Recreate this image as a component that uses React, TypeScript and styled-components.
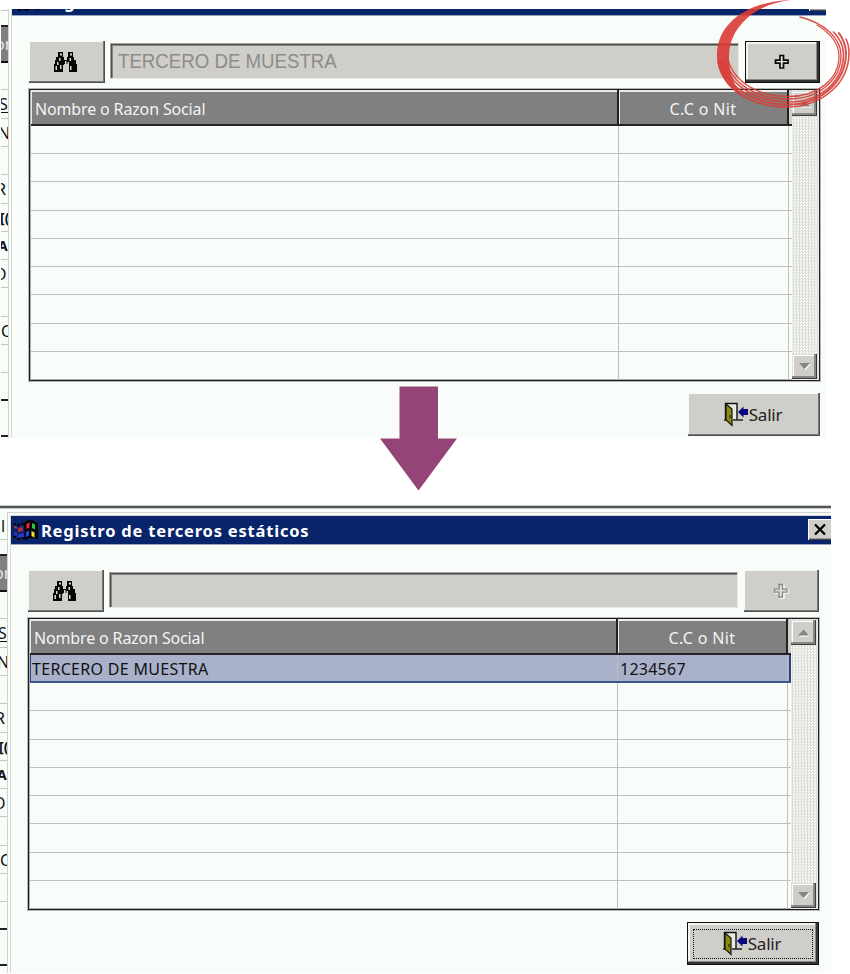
import React from "react";
import styled, { createGlobalStyle, css } from "styled-components";

const face = "#d0cec8";
const paper = "#f8fdf9";
const ui = '"Noto Sans", "DejaVu Sans", sans-serif';

const GlobalStyle = createGlobalStyle`
  * { box-sizing: border-box; }
  body { margin: 0; background: #fff; }
  svg { display: block; flex: none; }
`;

const Page = styled.main`
  position: relative;
  width: 850px;
  height: 974px;
  overflow: hidden;
  padding-top: 9px;
  background: #fff;
`;

const Capture = styled.section<{ $cropped?: boolean }>`
  overflow: hidden;
  width: ${(p) => (p.$cropped ? 825 : 831)}px;
  height: ${(p) => (p.$cropped ? 429 : 469)}px;
  margin: ${(p) => (p.$cropped ? "0 0 66px 1px" : "0")};
`;

const Desktop = styled.div<{ $cropped?: boolean }>`
  display: grid;
  grid-template-columns: 7px 824px;
  grid-template-rows: 8px 461px;
  width: 831px;
  margin-top: ${(p) => (p.$cropped ? -34 : 0)}px;
  background: ${paper};
`;

const TopEdge = styled.div`
  grid-column: 1 / 3;
  height: 4px;
  margin-top: 1px;
  border-top: 1px solid #c7cac7;
  border-bottom: 1px solid #c7cac7;
  background: #555;
`;

const Strip = styled.div`
  overflow: hidden;
  display: flex;
  flex-direction: column;
  font: 16px ${ui};
  color: #111;
`;

const StripCell = styled.div<{ $h: number; $tone?: "head" | "dark" }>`
  flex: none;
  display: flex;
  align-items: center;
  height: ${(p) => p.$h}px;
  white-space: nowrap;
  border-bottom: 1px solid #c3c5c2;
  ${(p) =>
    p.$tone === "head" &&
    css`
      background: #808080;
      color: #e8e8e8;
      border-bottom: 2px solid #111;
    `}
  ${(p) => p.$tone === "dark" && "border-bottom: 2px solid #222;"}
`;

const StripText = styled.span<{ $x?: number; $underline?: boolean; $bold?: boolean }>`
  margin-left: ${(p) => p.$x ?? 0}px;
  line-height: 16px;
  ${(p) => p.$bold && "font-weight: bold; font-size: 14px;"}
  ${(p) => p.$underline && "border-bottom: 1px solid #111;"}
`;

const Dialog = styled.div`
  width: 824px;
  height: 461px;
  padding: 3px 0 0 3px;
  border-left: 1px solid #d3d3cd;
  border-top: 1px solid #d3d3cd;
  box-shadow: inset 2px 2px 0 ${paper}, inset 3px 3px 0 #d9d9d3;
  background: ${paper};
`;

const TitleBar = styled.header`
  display: flex;
  align-items: center;
  width: 820px;
  height: 29px;
  padding-left: 2px;
  background: #08246b;
  border-bottom: 1px solid #9aa5c0;
`;

const Title = styled.h1`
  flex: 1;
  margin: 1px 0 0 2px;
  color: #fff;
  font: bold 16.5px/26px ${ui};
  letter-spacing: 0.8px;
  white-space: nowrap;
`;

const CloseButton = styled.button`
  display: flex;
  align-items: center;
  justify-content: center;
  width: 23px;
  height: 21px;
  margin-bottom: 2px;
  padding: 0;
  border: 0;
  background: ${face};
  box-shadow: inset 1px 1px #fff, inset 0 -1px #444, inset 0 -2px #999;
`;

const Body = styled.div`
  display: flex;
  flex-direction: column;
  align-items: flex-end;
  width: 809px;
  padding: 25px 1px 0 0;
`;

const SearchRow = styled.div`
  display: flex;
  align-items: flex-start;
  width: 791px;
  height: 42px;
`;

const Button = styled.button<{ $w: number; $focus?: boolean; $h?: number }>`
  display: flex;
  flex: none;
  align-items: center;
  justify-content: center;
  width: ${(p) => p.$w}px;
  height: ${(p) => p.$h ?? 42}px;
  padding: 0;
  border: 0;
  color: #222;
  background: ${face};
  box-shadow: inset -1px -1px #505050, inset -2px -2px #777, inset 1px 1px #f6faf5;
  ${(p) =>
    p.$focus &&
    css`
      box-shadow: inset 0 0 0 1px #111, inset -3px -3px #333, inset -4px -4px #888,
        inset 3px 3px #f3f4f0;
    `}
`;

const Field = styled.div`
  flex: none;
  width: 629px;
  height: 36px;
  margin: 2px 6px 0 5px;
  padding-left: 7px;
  border: 1px solid #a2a2a0;
  border-right-color: #e7e8e2;
  border-bottom-color: #e7e8e2;
  box-shadow: inset 1px 1px #4e4e4e, inset 2px 2px #858585;
  background: ${face};
  color: #8c8c88;
  font: 19.5px/35px "Liberation Sans", Arial, sans-serif;
  white-space: nowrap;
`;

const FieldText = styled.span`
  display: inline-block;
  transform-origin: left;
  transform: scaleX(0.957);
`;

const Grid = styled.div`
  display: grid;
  grid-template-columns: 762px 27px;
  grid-template-rows: 290px;
  width: 791px;
  height: 292px;
  margin-top: 6px;
  border: 1px solid #1d1d1d;
  box-shadow: 0 0 0 1px #b5b7b4, inset 0 0 0 1px #aaa;
`;

const Table = styled.div`
  display: grid;
  grid-template-rows: 36px repeat(9, minmax(0, 1fr));
  padding-left: 1px;
`;

const Row = styled.div<{ $selected?: boolean }>`
  display: grid;
  grid-template-columns: 588px 170px 1fr;
  grid-template-rows: minmax(0, 1fr);
  border-bottom: 1px solid #bdc0bd;
  color: #111;
  font: 16px/29px ${ui};
  &:last-child { border-bottom: 0; }
  ${(p) =>
    p.$selected &&
    css`
      background: #a9b0c9;
      border-bottom: 2px solid #3a568f;
      box-shadow: inset 1px 0 #29447c, inset -2px 0 #29447c;
    `}
`;

const HeadRow = styled(Row)`
  border-bottom: 2px solid #252525;
  background: ${face};
`;

const Cell = styled.div`
  padding-left: 2px;
  border-right: 1px solid #bdc0bd;
  white-space: nowrap;
  &:last-child { border: 0; }
`;

const HeadCell = styled.div<{ $center?: boolean }>`
  padding-left: ${(p) => (p.$center ? 0 : 4)}px;
  border-right: 2px solid #222;
  background: #808080;
  box-shadow: inset 1px 2px #e9ebe8;
  color: #f4f4f4;
  font: 16px/38px ${ui};
  text-align: ${(p) => (p.$center ? "center" : "left")};
  white-space: nowrap;
`;

const Fit = styled.span<{ $spacing: number }>`
  letter-spacing: ${(p) => p.$spacing}px;
`;

const ScrollBar = styled.div`
  display: flex;
  flex-direction: column;
  justify-content: space-between;
  padding: 1px 1px 1px 0;
  background-color: #f7f9f5;
  background-image: conic-gradient(#dcdcd6 25%, #f8faf6 0 50%, #dcdcd6 0 75%, #f8faf6 0);
  background-size: 3px 3px;
`;

const ScrollButton = styled.button`
  display: flex;
  align-items: center;
  justify-content: center;
  width: 25px;
  height: 25px;
  padding: 0;
  border: 0;
  background: ${face};
  box-shadow: inset -1px -1px #3c3c3c, inset -3px -3px #888, inset 1px 1px #ddd, inset 2px 2px #fff;
`;

const FocusRect = styled.span<{ $on?: boolean }>`
  display: flex;
  align-items: center;
  justify-content: center;
  width: 120px;
  height: 30px;
  padding-right: 3px;
  border: 1px ${(p) => (p.$on ? "dotted #111" : "solid transparent")};
  font: 17px/26px ${ui};
  letter-spacing: -0.2px;
`;

const ExitSlot = styled.div`
  margin-top: 12px;
`;

const DownArrow = styled.svg`
  position: absolute;
  left: 380px;
  top: 386px;
`;

const Highlight = styled.svg`
  position: absolute;
  left: 710px;
  top: 0;
`;

const Binoculars = () => (
  <svg width="26" height="22" viewBox="0 0 26 22">
    <path
      fill="#050505"
      d="M6 1h5v5h1v3h3V6h1V1h5v5h1v3h2v4h1v8h-8v-7h-1v-1h-4v1h-1v7H1v-8h2V9h1V6h2z"
      transform="translate(-2 0)"
    />
    <path
      fill="#d7d6d0"
      d="M6 2.500h2v2H6zM16 2.500h2v2h-2zM5 7h1.500v3H5zM3 11h1.500v3H3zM1.500 15H3v4H1.500zM6 14h1.500v4H6zM11 10h1.500v3H11zM15.500 7H17v3h-1.500zM13.500 11H15v3h-1.500zM16 15h1.500v4H16z"
    />
  </svg>
);

const Plus = ({ disabled }: { disabled?: boolean }) => (
  <svg width="18" height="16" viewBox="1 0 16 16" fill={disabled ? "#dddcd6" : "#e5e5df"}>
    {disabled && (
      <path d="M7 2.500h4v4h4v3.500h-4v5H7v-5H2.500V6.500H7z" stroke="#fff" strokeWidth="1.400" />
    )}
    <path
      d="M6 1.500h3.500v4.700H14v3H9.500v4.800H6V9.200H1.500v-3H6z"
      stroke={disabled ? "#888884" : "#080808"}
      strokeWidth={disabled ? 1.3 : 1.7}
    />
  </svg>
);

const Triangle = ({ up }: { up?: boolean }) => (
  <svg width="14" height="9" viewBox="0 0 14 9">
    <path d={up ? "M2 8.500h11L7.500 3z" : "M2 2h11L7.500 8z"} fill="#fff" />
    <path d={up ? "M1 7.500h11L6.500 1.500z" : "M1 1h11L6.500 7z"} fill="#85857f" />
  </svg>
);

const WinLogo = () => (
  <svg width="26" height="23" viewBox="0 0 26 23">
    <path d="M11 4c4-4 8-4 11-1l3 1v17c-5-3-9-3-13 1z" fill="#05060c" />
    <path d="M1 4h2v2H1zm3 1h3v2H4zm4-1h3v2H8zM0 17h3v2H0zm4 2h3v2H4zm4-1h4v2H8z" fill="#05060c" />
    <path d="M1 7l3 1v2L1 9zm4 2l5-1v4l-5 1z" fill="#b72c48" />
    <path d="M1 13l3 1v3l-3-1zm4 2l6-1v4l-6 1z" fill="#2838bd" />
    <path d="M13.500 5l3-1.500v5l-3 1.500z" fill="#f02c32" />
    <path d="M19 4l3 1.500v5L19 9z" fill="#27c943" />
    <path d="M13 13l3-1.500v5L13 18z" fill="#2447ed" />
    <path d="M18.500 12l3 1.500v5l-3-1.500z" fill="#f4e733" />
  </svg>
);

const Door = () => (
  <svg width="26" height="25" viewBox="0 0 26 25">
    <path d="M2.500 18V1.500H14V18" fill="#e9e9e3" stroke="#111" strokeWidth="1.400" />
    <path d="M1 18h2M10 18h10" stroke="#222" strokeWidth="1.500" />
    <path d="M3 2l6 5v16.500l-6-5.500z" fill="#8b8a14" stroke="#16160b" strokeWidth="1.200" />
    <path d="M7 13v3" stroke="#111" />
    <path d="M15 10l5.500-5.500V7H25v6h-4.500v2.500z" fill="#070782" />
  </svg>
);

interface StripItem {
  h: number;
  text?: string;
  x?: number;
  tone?: "head" | "dark";
  underline?: boolean;
  bold?: boolean;
}

const strip: StripItem[] = [
  { h: 28, text: "l", x: 1 },
  { h: 16, tone: "dark" },
  { h: 36, text: "or", x: -6, tone: "head" },
  { h: 27 },
  { h: 29, text: "S", x: -2, underline: true },
  { h: 28, text: "N", x: -3 },
  { h: 28 },
  { h: 29, text: "R", x: -5 },
  { h: 28, text: "[(", x: -1, bold: true },
  { h: 28, text: "A", x: -3, bold: true },
  { h: 28, text: "O", x: -7 },
  { h: 29 },
  { h: 28, text: "C", x: 0 },
  { h: 28 },
  { h: 28, tone: "dark" },
  { h: 36, tone: "dark" },
];

interface WindowProps {
  cropped?: boolean;
  query?: string;
  rows: [string, string][];
}

const RegistryWindow = ({ cropped, query, rows }: WindowProps) => (
  <Capture $cropped={cropped}>
    <Desktop $cropped={cropped}>
      <TopEdge />
      <Strip>
        {strip.map((s, i) => (
          <StripCell key={i} $h={s.h} $tone={s.tone}>
            <StripText $x={s.x} $underline={s.underline} $bold={s.bold}>{s.text}</StripText>
          </StripCell>
        ))}
      </Strip>
      <Dialog>
        <TitleBar>
          <WinLogo />
          <Title>Registro de terceros estáticos</Title>
          <CloseButton aria-label="Cerrar">
            <svg width="14" height="13" viewBox="0 0 14 13">
              <path d="M2 1.500l10 10M12 1.500l-10 10" stroke="#000" strokeWidth="2.300" />
            </svg>
          </CloseButton>
        </TitleBar>
        <Body>
          <SearchRow>
            <Button $w={76} aria-label="Buscar"><Binoculars /></Button>
            <Field><FieldText>{query}</FieldText></Field>
            <Button $w={75} $focus={cropped} aria-label="Agregar"><Plus disabled={!cropped} /></Button>
          </SearchRow>
          <Grid>
            <Table>
              <HeadRow>
                <HeadCell><Fit $spacing={-0.15}>Nombre o Razon Social</Fit></HeadCell>
                <HeadCell $center><Fit $spacing={0.35}>C.C o Nit</Fit></HeadCell>
              </HeadRow>
              {Array.from({ length: 9 }, (_, i) => (
                <Row key={i} $selected={!!rows[i]}>
                  <Cell><Fit $spacing={0.3}>{rows[i]?.[0]}</Fit></Cell>
                  <Cell><Fit $spacing={0.25}>{rows[i]?.[1]}</Fit></Cell>
                  <Cell />
                </Row>
              ))}
            </Table>
            <ScrollBar>
              <ScrollButton aria-label="Subir"><Triangle up /></ScrollButton>
              <ScrollButton aria-label="Bajar"><Triangle /></ScrollButton>
            </ScrollBar>
          </Grid>
          <ExitSlot>
            <Button $w={132} $h={43} $focus={!cropped}>
              <FocusRect $on={!cropped}><Door />Salir</FocusRect>
            </Button>
          </ExitSlot>
        </Body>
      </Dialog>
    </Desktop>
  </Capture>
);

export default function App() {
  return (
    <>
      <GlobalStyle />
      <Page>
        <RegistryWindow cropped query="TERCERO DE MUESTRA" rows={[]} />
        <RegistryWindow rows={[["TERCERO DE MUESTRA", "1234567"]]} />
        <DownArrow width="77" height="105" viewBox="0 0 77 105">
          <path d="M19.500 0.500h38.500V52.500H77L38.500 104.500 0 52.500h19.500z" fill="#954477" />
        </DownArrow>
        <Highlight width="140" height="112" viewBox="0 0 140 112" fill="none">
          <path
            d="M81 0C40 1 7 22 7 55c0 17 10 34 30 44C24 88 19 75 19 57c0-19 9-32 23-43C54 6 66 2 81 0z"
            fill="#dc3a34"
            fillOpacity=".9"
          />
          <g stroke="#d63f39" strokeLinecap="round" strokeOpacity=".9">
            <path d="M8 62C14 92 46 107.500 78 107c36-1 61-25 61-54 0-6-1-10-3-14" strokeWidth="1.600" />
            <path d="M10 62c8 28 38 43 69 42.500 34-.5 57-24.500 57-51.500 0-8-3-14-7-20" strokeWidth="2" />
            <path d="M12 60c9 28 37 42 67 42 33 0 55-22 54.500-49-.5-9-4-15-10-21" strokeWidth="1.700" />
            <path d="M14 57c8 29 34 42 65 42 31 0 52-20 52-44 0-16-16-32-41-38" strokeWidth="1.400" />
            <path d="M17 57c7 27 33 39.500 62 39.500 29 0 50-17.500 50-40.500 0-13-9-23-22-31" strokeWidth="1.300" />
          </g>
        </Highlight>
      </Page>
    </>
  );
}
